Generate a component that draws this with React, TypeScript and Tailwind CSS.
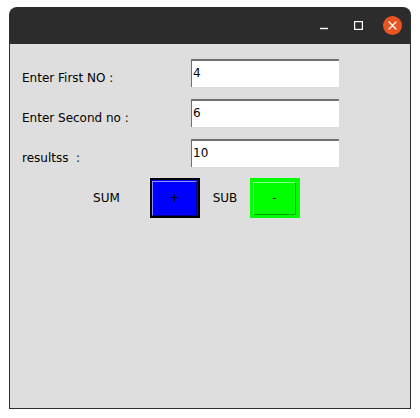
import React from "react";

const font = { fontFamily: '"DejaVu Sans", Verdana, sans-serif' };

function Row({ label, value, first }: { label: string; value: string; first?: boolean }) {
  return (
    <div className={`flex items-start ${first ? "" : "mt-[12px]"}`}>
      <div className="w-[169px] pt-[12px] text-[12px] leading-[14px] text-black whitespace-pre">{label}</div>
      <div className="w-[148px] h-[28px] bg-white border-t-2 border-l border-[#707070] pl-[1px] pt-[5px] text-[12px] leading-[14px] text-black">
        {value}
      </div>
    </div>
  );
}

export default function App() {
  return (
    <div className="w-[420px] h-[418px] bg-white pt-[7px] pl-[9px]" style={font}>
      <div className="w-[402px] h-[402px] flex flex-col">
        {/* title bar */}
        <div className="h-[37px] bg-[#2c2c2c] rounded-t-[8px] flex items-center justify-end pr-[9px]">
          <svg width="8" height="8" viewBox="0 0 8 8" className="mt-[1px]">
            <rect x="0" y="5.8" width="8" height="1.4" fill="#ffffff" />
          </svg>
          <svg width="9" height="9" viewBox="0 0 9 9" className="ml-[26px]">
            <rect x="0.6" y="0.6" width="7.8" height="7.8" fill="none" stroke="#ffffff" strokeWidth="1.2" />
          </svg>
          <div className="ml-[20px] w-[19px] h-[19px] rounded-full bg-[#e95420] flex items-center justify-center">
            <svg width="9" height="9" viewBox="0 0 9 9">
              <path d="M1 1 L8 8 M8 1 L1 8" stroke="#ffffff" strokeWidth="1.3" strokeLinecap="round" />
            </svg>
          </div>
        </div>

        {/* body */}
        <div className="flex-1 bg-[#dedede] border-x border-b border-[#2e2e2e] pt-[15px] pl-[12px]">
          <Row label="Enter First NO :" value="4" first />
          <Row label="Enter Second no :" value="6" />
          <Row label="resultss  :" value="10" />

          <div className="flex items-center mt-[11px] text-[12px] leading-[14px] text-black">
            <div className="ml-[41px] w-[87px] text-center">SUM</div>
            <button className="w-[50px] h-[40px] bg-[#0000ff] border-2 border-black p-0">
              <div className="w-[45px] h-[35px] border-t border-l border-r border-b border-t-[#8c8cff] border-l-[#8c8cff] border-r-[#00008c] border-b-[#00008c] flex items-center justify-center">
                +
              </div>
            </button>
            <div className="w-[50px] text-center">SUB</div>
            <button className="w-[50px] h-[40px] bg-[#00ff00] border-[3px] border-[#00ff00] p-0">
              <div className="w-[43px] h-[33px] border border-t-[#8cff8c] border-l-[#8cff8c] border-r-[#009a00] border-b-[#009a00] flex items-center justify-center">
                -
              </div>
            </button>
          </div>
        </div>
      </div>
    </div>
  );
}
